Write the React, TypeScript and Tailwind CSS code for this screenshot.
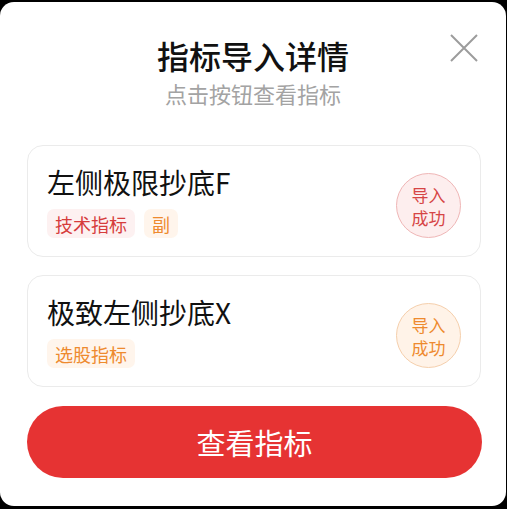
import React from "react";

const FONT = { fontFamily: '"Noto Sans CJK SC", "Noto Sans", sans-serif' };

type Item = {
  name: string;
  tags: { label: string; tone: "red" | "orange" }[];
  tone: "red" | "orange";
};

const ITEMS: Item[] = [
  {
    name: "左侧极限抄底F",
    tags: [
      { label: "技术指标", tone: "red" },
      { label: "副", tone: "orange" },
    ],
    tone: "red",
  },
  {
    name: "极致左侧抄底X",
    tags: [{ label: "选股指标", tone: "orange" }],
    tone: "orange",
  },
];

function Tag({ label, tone }: { label: string; tone: "red" | "orange" }) {
  return (
    <span
      className={`h-[29px] px-[8px] rounded-[7px] flex items-center text-[18px] leading-none ${
        tone === "red" ? "bg-[#fdf1f1] text-[#d63c3c]" : "bg-[#fff5ec] text-[#ee8a2e]"
      }`}
    >
      {label}
    </span>
  );
}

function Badge({ tone }: { tone: "red" | "orange" }) {
  return (
    <div
      className={`w-[65px] h-[65px] rounded-full border flex flex-col items-center justify-center text-[17px] leading-[23px] ${
        tone === "red"
          ? "border-[#efb6b6] bg-[#fdeeee] text-[#d64545]"
          : "border-[#f5cfac] bg-[#fff3e8] text-[#ee8a2e]"
      }`}
    >
      <span>导入</span>
      <span>成功</span>
    </div>
  );
}

export default function App() {
  return (
    <div className="w-[507px] h-[509px] bg-black pt-[2px] pb-[3px] pr-[1px]" style={FONT}>
      <div className="relative h-full bg-white rounded-[14px] flex flex-col">
        {/* close */}
        <button className="absolute left-[449px] top-[31px] w-[30px] h-[30px] text-[#9c9c9c]">
          <svg viewBox="0 0 30 30" width="30" height="30" fill="none" stroke="currentColor" strokeWidth="2">
            <path d="M2 2 L28 28 M28 2 L2 28" />
          </svg>
        </button>

        <div className="pt-[33px] text-center">
          <div className="text-[32px] leading-[40px] text-[#111] font-medium">指标导入详情</div>
          <div className="mt-[4px] text-[22px] leading-[28px] text-[#a3a3a3]">点击按钮查看指标</div>
        </div>

        <div className="mt-[38px] ml-[27px] w-[454px] flex flex-col gap-[18px]">
          {ITEMS.map((item) => (
            <div
              key={item.name}
              className="h-[112px] border border-[#ebebeb] rounded-[16px] pl-[19px] pr-[19px] pt-[19px] flex justify-between items-start"
            >
              <div>
                <div className="text-[28px] leading-[34px] text-[#111]">{item.name}</div>
                <div className="mt-[10px] flex gap-[9px]">
                  {item.tags.map((t) => (
                    <Tag key={t.label} label={t.label} tone={t.tone} />
                  ))}
                </div>
              </div>
              <div className="mt-[8px]">
                <Badge tone={item.tone} />
              </div>
            </div>
          ))}
        </div>

        <button className="mt-[19px] ml-[27px] w-[455px] h-[72px] rounded-full bg-[#e63333] text-white text-[29px] leading-none">
          查看指标
        </button>
      </div>
    </div>
  );
}
